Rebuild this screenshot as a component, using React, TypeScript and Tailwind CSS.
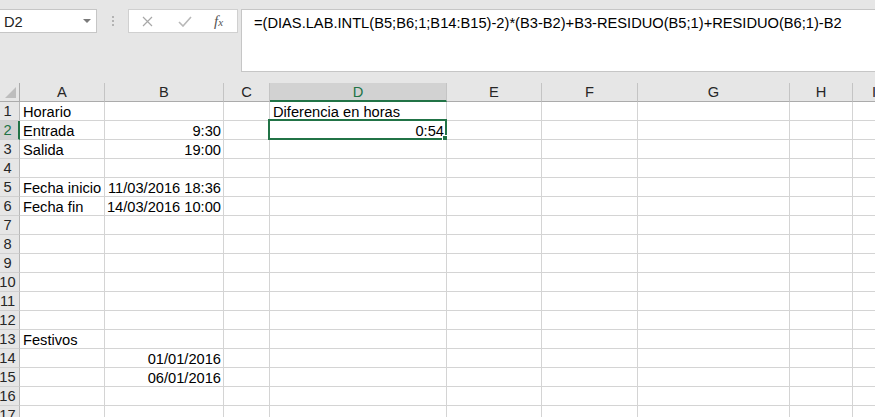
import React from "react";

const FONT = { fontFamily: '"Liberation Sans", Arial, sans-serif' };

const cols = [
  { key: "A", w: "w-[85px]" },
  { key: "B", w: "w-[119px]" },
  { key: "C", w: "w-[46px]" },
  { key: "D", w: "w-[177px]" },
  { key: "E", w: "w-[95px]" },
  { key: "F", w: "w-[96px]" },
  { key: "G", w: "w-[152px]" },
  { key: "H", w: "w-[63px]" },
  { key: "I", w: "w-[43px]" },
];

type Cell = { text: string; right?: boolean };

const data: Record<number, Record<string, Cell>> = {
  1: { A: { text: "Horario" }, D: { text: "Diferencia en horas" } },
  2: { A: { text: "Entrada" }, B: { text: "9:30", right: true }, D: { text: "0:54", right: true } },
  3: { A: { text: "Salida" }, B: { text: "19:00", right: true } },
  5: { A: { text: "Fecha inicio" }, B: { text: "11/03/2016 18:36", right: true } },
  6: { A: { text: "Fecha fin" }, B: { text: "14/03/2016 10:00", right: true } },
  13: { A: { text: "Festivos" } },
  14: { B: { text: "01/01/2016", right: true } },
  15: { B: { text: "06/01/2016", right: true } },
};

const rows = Array.from({ length: 17 }, (_, i) => i + 1);

function FormulaBar() {
  return (
    <div className="flex items-start h-[83px] pt-[9px]">
      {/* name box */}
      <div className="relative w-[97px] h-[24px] bg-white border border-l-0 border-[#c6c6c6] pl-[4px] pt-[4px] text-[14.67px] leading-[16px] text-[#222]">
        D2
        <svg className="absolute left-[83px] top-[9px]" width="8" height="4" viewBox="0 0 8 4">
          <polygon points="0,0 8,0 4,4" fill="#7a7a7a" />
        </svg>
      </div>

      {/* grip dots */}
      <div className="flex flex-col gap-[2px] ml-[15px] mt-[7px]">
        <span className="w-[2px] h-[2px] bg-[#b3b3b3]" />
        <span className="w-[2px] h-[2px] bg-[#b3b3b3]" />
        <span className="w-[2px] h-[2px] bg-[#b3b3b3]" />
      </div>

      {/* cancel / enter / fx */}
      <div className="flex items-center ml-[14px] w-[110px] h-[24px] bg-white border border-[#d0d0d0]">
        <svg className="ml-[13px]" width="11" height="11" viewBox="0 0 11 11">
          <path d="M1 1 L10 10 M10 1 L1 10" stroke="#a8a8a8" strokeWidth="1.2" />
        </svg>
        <svg className="ml-[25px]" width="14" height="11" viewBox="0 0 14 11">
          <path d="M1 6 L5 10 L13 1" stroke="#b8b8b8" strokeWidth="1.6" fill="none" />
        </svg>
        <span
          className="ml-[22px] italic text-[#555] text-[15px] leading-none"
          style={{ fontFamily: '"Liberation Serif", "Times New Roman", serif' }}
        >
          f<span className="text-[11px]">x</span>
        </span>
      </div>

      {/* formula text */}
      <div className="ml-[3px] flex-1 h-[63px] bg-white border border-r-0 border-[#c6c6c6] pl-[12px] pt-[5px] text-[14.67px] leading-[16px] text-black whitespace-nowrap overflow-hidden">
        =(DIAS.LAB.INTL(B5;B6;1;B14:B15)-2)*(B3-B2)+B3-RESIDUO(B5;1)+RESIDUO(B6;1)-B2
      </div>
    </div>
  );
}

function HeaderRow() {
  return (
    <div className="flex h-[19px]">
      <div className="w-[20px] h-[19px] border-r border-b border-[#ababab] bg-[#e6e6e6]">
        <svg width="19" height="18" viewBox="0 0 19 18">
          <polygon points="5,15 16,15 16,4" fill="#bdbdbd" />
        </svg>
      </div>
      {cols.map((c) => {
        const sel = c.key === "D";
        return (
          <div
            key={c.key}
            className={`${c.w} shrink-0 h-[19px] border-r border-[#c4c4c4] text-center text-[14.67px] leading-[18px] ${
              sel
                ? "bg-[#d2d2d2] border-b-2 border-b-[#217346] text-[#217346]"
                : "bg-[#e6e6e6] border-b border-b-[#ababab] text-[#262626]"
            }`}
          >
            {c.key}
          </div>
        );
      })}
    </div>
  );
}

function GridRow({ n }: { n: number }) {
  const rowSel = n === 2;
  const cells = data[n] || {};
  return (
    <div className="flex h-[19px]">
      <div
        className={`w-[20px] shrink-0 h-[19px] overflow-hidden border-b border-[#d0d0d0] text-[14.67px] leading-[18px] ${
          rowSel
            ? "bg-[#d2d2d2] border-r-2 border-r-[#217346] text-[#217346]"
            : "bg-[#e6e6e6] border-r border-r-[#b8b8b8] text-[#262626]"
        }`}
      >
        <div className="w-[27px] -ml-[6px] text-center">{n}</div>
      </div>
      {cols.map((c) => {
        const cell = cells[c.key];
        const active = n === 2 && c.key === "D";
        return (
          <div
            key={c.key}
            className={`${c.w} shrink-0 h-[19px] relative bg-white border-r border-b border-[#d4d4d4]`}
          >
            {cell && (
              <div
                className={`pt-[3px] text-[14.67px] leading-[15px] text-black whitespace-nowrap overflow-hidden ${
                  cell.right ? "text-right pr-[2px]" : "pl-[3px]"
                }`}
              >
                {cell.text}
              </div>
            )}
            {active && (
              <div className="absolute -left-[2px] -top-[2px] -right-[1px] -bottom-[1px] border-2 border-[#217346]">
                <div className="absolute -right-[4px] -bottom-[4px] w-[7px] h-[7px] bg-[#217346] border border-white" />
              </div>
            )}
          </div>
        );
      })}
    </div>
  );
}

export default function App() {
  return (
    <div className="w-[875px] h-[417px] overflow-hidden bg-[#e6e6e6]" style={FONT}>
      <FormulaBar />
      <HeaderRow />
      {rows.map((n) => (
        <GridRow key={n} n={n} />
      ))}
    </div>
  );
}
